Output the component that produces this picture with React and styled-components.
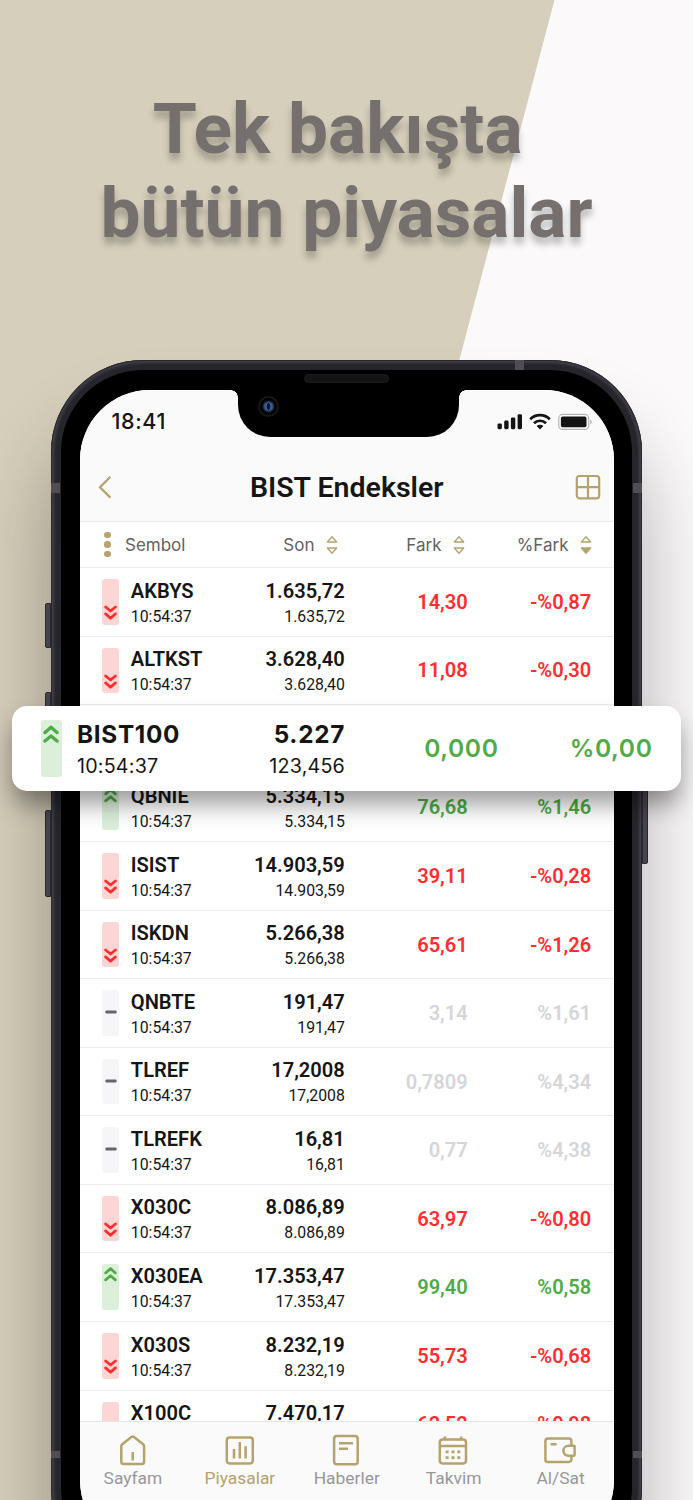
import React from 'react'
import styled, { createGlobalStyle } from 'styled-components'

const GOLD = '#b5a26c'

const colors = {
  down: '#ff2d2d',
  up: '#4fab46',
  flat: '#d5d5da'
}

const badgeColors = {
  down: '#fbd6d4',
  up: '#dcefdb',
  flat: '#f6f6f8'
}

const rows = [
  { name: 'AKBYS', last: '1.635,72', diff: '14,30', pct: '-%0,87', trend: 'down' },
  { name: 'ALTKST', last: '3.628,40', diff: '11,08', pct: '-%0,30', trend: 'down' },
  null,
  { name: 'QBNIE', last: '5.334,15', diff: '76,68', pct: '%1,46', trend: 'up' },
  { name: 'ISIST', last: '14.903,59', diff: '39,11', pct: '-%0,28', trend: 'down' },
  { name: 'ISKDN', last: '5.266,38', diff: '65,61', pct: '-%1,26', trend: 'down' },
  { name: 'QNBTE', last: '191,47', diff: '3,14', pct: '%1,61', trend: 'flat' },
  { name: 'TLREF', last: '17,2008', diff: '0,7809', pct: '%4,34', trend: 'flat' },
  { name: 'TLREFK', last: '16,81', diff: '0,77', pct: '%4,38', trend: 'flat' },
  { name: 'X030C', last: '8.086,89', diff: '63,97', pct: '-%0,80', trend: 'down' },
  { name: 'X030EA', last: '17.353,47', diff: '99,40', pct: '%0,58', trend: 'up' },
  { name: 'X030S', last: '8.232,19', diff: '55,73', pct: '-%0,68', trend: 'down' },
  { name: 'X100C', last: '7.470,17', diff: '62,52', pct: '-%0,98', trend: 'down' }
]

const Chevrons = ({ trend, size }) => {
  if (trend === 'flat') {
    return <svg width="12" height="4" viewBox="0 0 12 4"><rect x="0.4" y="0.5" width="11.2" height="3" rx="1" fill="#66666a" /></svg>
  }
  return (
    <svg width={size} height={size * 1.25} viewBox="0 0 12 15" fill="none" stroke={colors[trend]} strokeWidth="2.5" strokeLinecap="round" strokeLinejoin="round">
      {trend === 'down'
        ? <path d="M1.5 1.8 6 5.6l4.5-3.8M1.5 8.2 6 12.2l4.5-4" />
        : <path d="M1.5 6.4 6 2.4l4.5 4M1.5 12.8 6 9l4.5 3.8" />}
    </svg>
  )
}

const SortIcon = ({ active }) => (
  <svg width="12" height="20" viewBox="0 0 12 20" fill="none" stroke={GOLD} strokeWidth="1.3" strokeLinejoin="round">
    <path d="M6 1.8 10.7 7H1.3z" />
    <path d="M6 18.2 10.7 13H1.3z" fill={active ? GOLD : 'none'} />
  </svg>
)

const TabIcon = ({ name }) => (
  <svg width="34" height="34" viewBox="0 0 34 34" fill="none" stroke={GOLD} strokeWidth="2.5" strokeLinejoin="round">
    {name === 'home' && <path d="M5.3 13.4q0-1.3 1-2.1L15.4 4q1.3-1 2.6 0l9.1 7.3q1 .8 1 2.1v15.4a2.3 2.3 0 0 1-2.3 2.3H7.6a2.3 2.3 0 0 1-2.3-2.3zM16.7 19v8.6" />}
    {name === 'chart' && <>
      <rect x="3.8" y="4.4" width="26" height="26" rx="2.8" />
      <path d="M11 16v9.4M16.8 9v16.4M22.6 13.2v12.2" />
    </>}
    {name === 'news' && <>
      <rect x="5.1" y="2.9" width="23.6" height="28.3" rx="2.8" />
      <path d="M10 10.3h14M10 15.8h9" />
    </>}
    {name === 'calendar' && <>
      <rect x="3.8" y="6.6" width="26.2" height="23.8" rx="2.8" />
      <path d="M3.8 13h26.2M8.8 3.6v3M25.2 3.6v3" />
      <path d="M9.6 18.9h3M15.5 18.9h3M21.3 18.9h3M9.6 24.7h3M15.5 24.7h3M21.3 24.7h3" strokeWidth="2.8" />
    </>}
    {name === 'wallet' && <>
      <path d="M28.4 12.4V8.2a2.6 2.6 0 0 0-2.6-2.6H5a2.6 2.6 0 0 0-2.6 2.6v18.2A2.6 2.6 0 0 0 5 29h20.8a2.6 2.6 0 0 0 2.6-2.6v-3.6" />
      <path d="M31.6 12.8v9.2q0 .8-.8.8h-5.4a5 5 0 0 1 0-10h5.4q.8 0 .8.8M7.6 11.2h6" />
    </>}
  </svg>
)

const tabs = [
  { label: 'Sayfam', icon: 'home' },
  { label: 'Piyasalar', icon: 'chart', active: true },
  { label: 'Haberler', icon: 'news' },
  { label: 'Takvim', icon: 'calendar' },
  { label: 'Al/Sat', icon: 'wallet' }
]

const App = () => (
  <Page>
    <GlobalStyle />
    <Slogan>Tek bakışta&nbsp;<br />bütün piyasalar</Slogan>
    <Phone>
      <SideButton $side="left" $top={243} $height={45} />
      <SideButton $side="left" $top={332} $height={87} />
      <SideButton $side="left" $top={450} $height={87} />
      <SideButton $side="right" $top={370} $height={134} />
      <Antenna $left="0" $top={123} />
      <Antenna $left="582px" $top={123} />
      <Antenna $left="0" $top={1091} $height={7} />
      <Antenna $left="582px" $top={1091} $height={7} />
      <Antenna $left="464px" $top={0} />
      <Bezel>
        <Speaker />
        <Screen>
          <StatusBar>
            <Clock>18:41</Clock>
            <svg width="96" height="20" viewBox="0 0 96 20">
              <g fill="#141414">
                <rect x="0.5" y="12.4" width="4.4" height="5.8" rx="1.4" />
                <rect x="7.2" y="9.6" width="4.4" height="8.6" rx="1.4" />
                <rect x="13.9" y="6.4" width="4.4" height="11.8" rx="1.4" />
                <rect x="20.6" y="3.2" width="4.4" height="15" rx="1.4" />
              </g>
              <g fill="none" stroke="#141414" strokeWidth="2.7">
                <path d="M33.2 8.2a14 14 0 0 1 19.6 0" />
                <path d="M37 12.2a8.6 8.6 0 0 1 12 0" />
              </g>
              <path d="M43 18.4 39.7 15.1a4.7 4.7 0 0 1 6.6 0z" fill="#141414" />
              <rect x="61.7" y="3.4" width="30" height="15" rx="4" fill="none" stroke="#b5b5b5" strokeWidth="1.2" />
              <rect x="63.9" y="5.6" width="25.6" height="10.6" rx="1.8" fill="#141414" />
              <path d="M93.2 8.4c2 .8 2 4.2 0 5z" fill="#b5b5b5" />
            </svg>
          </StatusBar>
          <Notch><Camera /></Notch>
          <TitleBar>
            <svg width="14" height="24" viewBox="0 0 14 24" fill="none" stroke={GOLD} strokeWidth="2.3"><path d="M12.4 1.8 2 12.2l10.4 10.4" /></svg>
            <Title>BIST Endeksler</Title>
            <svg width="26" height="26" viewBox="0 0 26 26" fill="none" stroke={GOLD} strokeWidth="2.2">
              <rect x="1.8" y="2" width="22.4" height="22.4" rx="2.8" />
              <path d="M13 2v22.4M1.8 13.2h22.4" />
            </svg>
          </TitleBar>
          <TableHead>
            <Dots><i /><i /><i /></Dots>
            <HeadCell>Sembol</HeadCell>
            <HeadCell $right>Son <SortIcon /></HeadCell>
            <HeadCell $right>Fark <SortIcon /></HeadCell>
            <HeadCell $right>%Fark <SortIcon active /></HeadCell>
          </TableHead>
          <List>
            {rows.map((row, i) => row ? (
              <Row key={i}>
                <Badge $trend={row.trend}><Chevrons trend={row.trend} size={13} /></Badge>
                <Cell><Strong>{row.name}</Strong><Small>10:54:37</Small></Cell>
                <Cell $right><Strong>{row.last}</Strong><Small>{row.last}</Small></Cell>
                <Change $trend={row.trend}>{row.diff}</Change>
                <Change $trend={row.trend}>{row.pct}</Change>
              </Row>
            ) : <Row key={i} />)}
          </List>
          <TabBar>
            {tabs.map(tab => (
              <Tab key={tab.label} $active={tab.active}>
                <TabIcon name={tab.icon} />
                {tab.label}
              </Tab>
            ))}
          </TabBar>
        </Screen>
      </Bezel>
    </Phone>
    <Highlight>
      <Badge $trend="up" $large><Chevrons trend="up" size={16} /></Badge>
      <Cell><BigName>BIST100</BigName><BigSmall>10:54:37</BigSmall></Cell>
      <Cell $right><BigName>5.227</BigName><BigSmall>123,456</BigSmall></Cell>
      <BigChange>0,000</BigChange>
      <BigChange>%0,00</BigChange>
    </Highlight>
  </Page>
)

export default App

const GlobalStyle = createGlobalStyle`
  body {
    margin: 0;
    font-family: Roboto, sans-serif;
    color: #151515;
  }
  * {
    box-sizing: border-box;
  }
  svg {
    display: block;
    flex-shrink: 0;
  }
`

const Page = styled.main`
  position: relative;
  width: 693px;
  height: 1500px;
  overflow: hidden;
  background: #fbf9fa;
  &::before {
    content: '';
    position: absolute;
    inset: 0;
    background: #d6cfbb;
    clip-path: polygon(0 0, 554.5px 0, 158px 1500px, 0 1500px);
  }
`

const Slogan = styled.h1`
  position: relative;
  height: 360px;
  margin: 0;
  padding-top: 87px;
  text-align: center;
  font-size: 71.3px;
  line-height: 83.6px;
  font-weight: 700;
  color: #75706d;
  text-shadow: 0 7px 7px rgba(0, 0, 0, 0.25);
`

const Phone = styled.div`
  position: relative;
  width: 591px;
  height: 1220px;
  margin-left: 51px;
  padding: 10px;
  border-radius: 92px;
  background: #26252b;
  box-shadow: inset 0 0 0 1px #29282d, inset 0 0 3px 3px #43424a, 0 70px 80px rgba(30, 20, 20, 0.33);
`

const SideButton = styled.span`
  position: absolute;
  ${p => p.$side}: -6px;
  top: ${p => p.$top}px;
  width: 6px;
  height: ${p => p.$height}px;
  border: 1px solid #29282d;
  border-radius: ${p => p.$side === 'left' ? '2px 0 0 2px' : '0 2px 2px 0'};
  background: #46454e;
`

const Antenna = styled.span`
  position: absolute;
  left: ${p => p.$left};
  top: ${p => p.$top}px;
  width: 9px;
  height: ${p => p.$height || 10}px;
  background: #514d55;
`

const Bezel = styled.div`
  height: 1200px;
  padding: 0 18px 0 18.5px;
  border-radius: 82px;
  background: #000;
`

const Speaker = styled.div`
  width: 85px;
  height: 9px;
  margin: 0 auto;
  position: relative;
  top: 4px;
  border: 1px solid #1c1c1c;
  border-radius: 5px;
  background: #141414;
`

const Screen = styled.div`
  position: relative;
  display: flex;
  flex-direction: column;
  height: 1160px;
  margin-top: 11px;
  border-radius: 70px;
  overflow: hidden;
  background: #fff;
`

const StatusBar = styled.div`
  display: flex;
  justify-content: space-between;
  align-items: center;
  height: 63px;
  padding: 0 21px 2px 32px;
  background: #fafafa;
`

const Clock = styled.span`
  font: 500 21.5px Inter, sans-serif;
  letter-spacing: 0.6px;
`

const Notch = styled.div`
  position: absolute;
  left: 158.5px;
  top: 0;
  width: 221px;
  height: 46.5px;
  border-radius: 0 0 32px 32px;
  background: #000;
  &::before, &::after {
    content: '';
    position: absolute;
    top: 0;
    left: -7px;
    width: 7px;
    height: 7px;
    background: radial-gradient(circle at 0 100%, transparent 6.5px, #000 7px);
  }
  &::after {
    left: auto;
    right: -7px;
    transform: scaleX(-1);
  }
`

const Camera = styled.span`
  position: absolute;
  left: 20px;
  top: 6px;
  width: 21px;
  height: 21px;
  border: 2px solid #161616;
  border-radius: 50%;
  background: radial-gradient(ellipse 3px 5px at 50% 50%, #0a1220 60%, transparent 70%), radial-gradient(circle, #35609c 30%, #0b1626 48%, #000 55%);
`

const TitleBar = styled.header`
  display: grid;
  grid-template-columns: 1fr auto 1fr;
  align-items: center;
  height: 69px;
  padding: 0 13px 0 18px;
  border-bottom: 1.5px solid #e9e9e9;
  background: #fafafa;
  svg:last-child {
    justify-self: end;
  }
`

const Title = styled.h2`
  margin: 0;
  padding-right: 5px;
  font-size: 28.5px;
  font-weight: 600;
`

const TableHead = styled.div`
  display: grid;
  grid-template-columns: 21px 92px 120.5px 127px 127px;
  align-items: center;
  height: 46px;
  padding-left: 24.5px;
  border-bottom: 1px solid #ececec;
`

const Dots = styled.span`
  display: grid;
  gap: 3px;
  i {
    width: 6.6px;
    height: 6.6px;
    border-radius: 50%;
    background: ${GOLD};
  }
`

const HeadCell = styled.span`
  display: flex;
  align-items: center;
  justify-content: ${p => p.$right ? 'flex-end' : 'flex-start'};
  gap: 11px;
  font: 400 17px Inter, sans-serif;
  color: #626262;
`

const List = styled.div`
  height: 853px;
  overflow: hidden;
`

const Row = styled.div`
  display: grid;
  grid-template-columns: 17px 113.5px 112.3px 123px 123.5px;
  align-items: center;
  height: 68.55px;
  padding-left: 22.5px;
  border-bottom: 1px solid #ececec;
`

const Badge = styled.span`
  display: flex;
  align-items: ${p => p.$trend === 'flat' ? 'center' : p.$trend === 'up' ? 'flex-start' : 'flex-end'};
  justify-content: center;
  height: ${p => p.$large ? 57 : 45.5}px;
  padding: ${p => p.$large ? 4 : 2}px 0 3.3px;
  border-radius: 3px;
  background: ${p => badgeColors[p.$trend]};
`

const Cell = styled.div`
  display: flex;
  flex-direction: column;
  padding: 2.6px 0 0 ${p => p.$right ? 0 : 11.8}px;
  align-items: ${p => p.$right ? 'flex-end' : 'flex-start'};
`

const Strong = styled.b`
  font-size: 20.1px;
  line-height: 26px;
  font-weight: 600;
  white-space: nowrap;
`

const Small = styled.span`
  font-size: 15.8px;
  line-height: 25px;
`

const Change = styled.span`
  font-size: 20.1px;
  font-weight: 600;
  text-align: right;
  color: ${p => colors[p.$trend]};
`

const TabBar = styled.nav`
  flex: 1;
  display: grid;
  grid-template-columns: repeat(5, 1fr);
  border-top: 1.5px solid #e6e6e6;
  background: #fafafa;
`

const Tab = styled.span`
  display: flex;
  flex-direction: column;
  align-items: center;
  padding-top: 11px;
  font-size: 17.4px;
  line-height: 22.5px;
  color: ${p => p.$active ? GOLD : '#97979b'};
  svg {
    margin-right: 0.6px;
  }
`

const Highlight = styled.section`
  position: absolute;
  left: 12px;
  top: 705.5px;
  display: grid;
  grid-template-columns: 21.5px 151px 132px 153.5px 154px;
  align-items: center;
  width: 669px;
  height: 85px;
  padding-left: 28.5px;
  border-radius: 15px;
  background: #fff;
  box-shadow: 0 15px 24px -2px rgba(0, 0, 0, 0.4);
  ${Cell} {
    padding-top: 4px;
  }
  ${Cell}:nth-child(2) {
    padding-left: 15px;
  }
`

const BigName = styled.b`
  font: 700 24.3px/32px Inter, sans-serif;
  letter-spacing: 0.7px;
`

const BigSmall = styled.span`
  font: 400 19.7px/32px Inter, sans-serif;
  letter-spacing: 0.2px;
`

const BigChange = styled.span`
  font: 600 24.6px Inter, sans-serif;
  letter-spacing: 0.6px;
  text-align: right;
  color: ${colors.up};
`
